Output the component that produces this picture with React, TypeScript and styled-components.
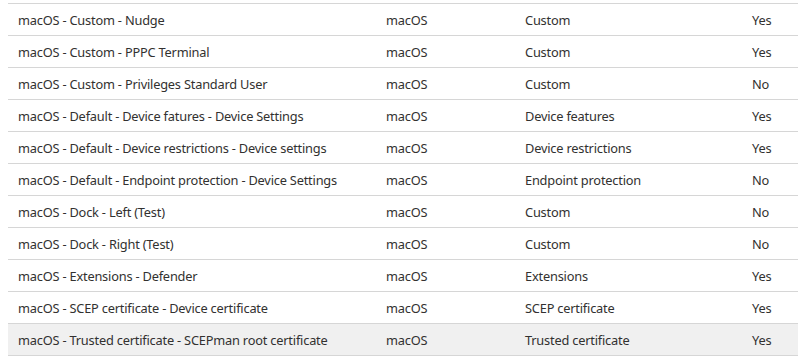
import React from "react";
import styled, { createGlobalStyle } from "styled-components";

const Global = createGlobalStyle`
  html, body { margin: 0; padding: 0; background: #ffffff; }
  body { font-family: "Segoe UI", "Noto Sans", "Open Sans", sans-serif; }
`;

const Table = styled.div`
  margin: 3px 2px 0 8px;
  border-top: 1px solid #d6d6d6;
  display: flex;
  flex-direction: column;
`;

const Row = styled.div<{ $selected?: boolean }>`
  display: grid;
  grid-template-columns: 368px 139px 227px 1fr;
  height: 31px;
  align-items: center;
  border-bottom: 1px solid #d6d6d6;
  background: ${(p) => (p.$selected ? "#f0f0f0" : "#ffffff")};
`;

const Cell = styled.div`
  padding-left: 10px;
  font-size: 12.8px;
  letter-spacing: -0.2px;
  color: #323130;
  white-space: nowrap;
  overflow: hidden;
`;

const rows: [string, string, string, string][] = [
  ["macOS - Custom - Nudge", "macOS", "Custom", "Yes"],
  ["macOS - Custom - PPPC Terminal", "macOS", "Custom", "Yes"],
  ["macOS - Custom - Privileges Standard User", "macOS", "Custom", "No"],
  ["macOS - Default - Device fatures - Device Settings", "macOS", "Device features", "Yes"],
  ["macOS - Default - Device restrictions - Device settings", "macOS", "Device restrictions", "Yes"],
  ["macOS - Default - Endpoint protection - Device Settings", "macOS", "Endpoint protection", "No"],
  ["macOS - Dock - Left (Test)", "macOS", "Custom", "No"],
  ["macOS - Dock - Right (Test)", "macOS", "Custom", "No"],
  ["macOS - Extensions - Defender", "macOS", "Extensions", "Yes"],
  ["macOS - SCEP certificate - Device certificate", "macOS", "SCEP certificate", "Yes"],
  ["macOS - Trusted certificate - SCEPman root certificate", "macOS", "Trusted certificate", "Yes"],
];

export default function App() {
  return (
    <>
      <Global />
      <Table>
        {rows.map((r, i) => (
          <Row key={i} $selected={i === rows.length - 1}>
            {r.map((c, j) => (
              <Cell key={j}>{c}</Cell>
            ))}
          </Row>
        ))}
      </Table>
    </>
  );
}
